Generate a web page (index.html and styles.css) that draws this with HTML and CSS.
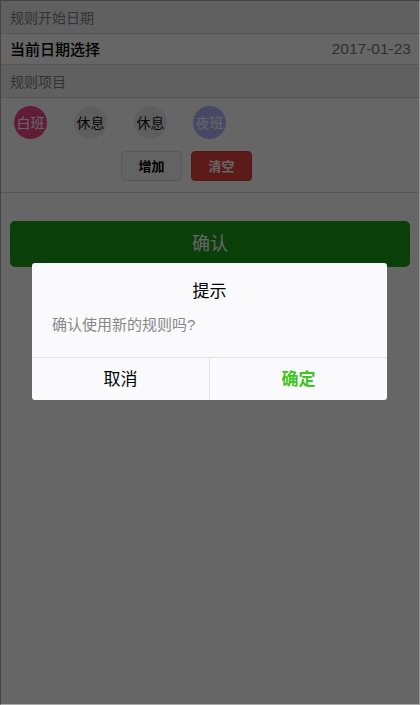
FILE: index.html
```html
<!DOCTYPE html>
<html lang="zh-CN">
<head>
<meta charset="utf-8">
<title>规则设置</title>
<link rel="stylesheet" href="styles.css">
</head>
<body>
<div class="frame">
  <div class="page">
    <div class="section-title">规则开始日期</div>
    <div class="cell">
      <span class="cell-label">当前日期选择</span>
      <span class="cell-value">2017-01-23</span>
    </div>
    <div class="section-title">规则项目</div>
    <div class="rules">
      <div class="chips">
        <span class="chip chip-day">白班</span>
        <span class="chip chip-rest">休息</span>
        <span class="chip chip-rest">休息</span>
        <span class="chip chip-night">夜班</span>
      </div>
      <div class="actions">
        <button class="btn btn-add">增加</button>
        <button class="btn btn-clear">清空</button>
      </div>
    </div>
    <div class="confirm-area">
      <button class="btn-primary">确认</button>
    </div>
  </div>
  <div class="mask"></div>
  <div class="dialog">
    <div class="dialog-title">提示</div>
    <div class="dialog-body">确认使用新的规则吗?</div>
    <div class="dialog-ft">
      <span class="dialog-btn dialog-cancel">取消</span>
      <span class="dialog-btn dialog-ok">确定</span>
    </div>
  </div>
</div>
</body>
</html>
```

FILE: styles.css
```css
* { box-sizing: border-box; }
html, body { margin: 0; padding: 0; }
body {
  font-family: "Liberation Sans", "Noto Sans CJK SC", sans-serif;
  background: #fff;
}
.frame {
  position: relative;
  width: 420px;
  height: 705px;
  border-style: solid;
  border-width: 1px;
  border-color: #444 #999 #aaa #444;
  overflow: hidden;
  background: #fff;
}
.page {
  display: flex;
  flex-direction: column;
  height: 100%;
}
.section-title {
  height: 33px;
  padding: 0 9px;
  display: flex;
  align-items: center;
  font-size: 14px;
  line-height: 1;
  color: #808080;
  background: #efeff1;
  border-bottom: 1px solid #d6d6d6;
  padding-top: 2px;
}
.cell {
  height: 31px;
  display: flex;
  align-items: center;
  justify-content: space-between;
  padding: 0 8px 0 9px;
  border-bottom: 1px solid #d6d6d6;
  font-size: 15px;
  line-height: 1;
}
.cell-label { color: #000; font-weight: 500; }
.cell-value { color: #7a7a7a; font-size: 15.5px; }
.rules {
  padding: 8px 0 11px 13px;
  border-bottom: 1px solid #d6d6d6;
}
.chips {
  display: flex;
  gap: 27px;
}
.chip {
  width: 33px;
  height: 33px;
  border-radius: 50%;
  display: flex;
  align-items: center;
  justify-content: center;
  font-size: 14px;
  line-height: 1;
}
.chip:nth-child(4) { margin-left: -1px; }
.chip-day { background: #f24a8c; color: #fff; }
.chip-rest { background: #ececec; color: #111; }
.chip-night { background: #b2b2ff; color: #fff; }
.actions {
  display: flex;
  gap: 9px;
  margin-top: 12px;
  padding-left: 107px;
}
.btn {
  width: 61px;
  height: 30px;
  border-radius: 4px;
  font-family: inherit;
  font-size: 13px;
  font-weight: bold;
  padding: 0;
  line-height: 1;
}
.btn-add { background: #f8f8f8; border: 1px solid #ddd; color: #000; }
.btn-clear { background: #e64340; border: 1px solid #ce3c39; color: #fff; }
.confirm-area {
  padding: 28px 9px 0;
}
.btn-primary {
  display: block;
  width: 100%;
  height: 46px;
  border: none;
  border-radius: 5px;
  background: #1b9e1a;
  color: #fff;
  font-family: inherit;
  font-size: 18px;
  line-height: 1;
  padding: 0;
}
.mask {
  position: absolute;
  inset: 0;
  background: rgba(0, 0, 0, 0.6);
}
.dialog {
  position: absolute;
  left: 31px;
  top: 262px;
  width: 355px;
  background: #fafafc;
  border-radius: 3px;
  overflow: hidden;
}
.dialog-title {
  padding-top: 19px;
  height: 46px;
  text-align: center;
  font-size: 17px;
  line-height: 20px;
  color: #000;
}
.dialog-body {
  padding: 6px 20px 0;
  height: 48px;
  font-size: 15px;
  line-height: 20px;
  color: #888;
}
.dialog-ft {
  display: flex;
  height: 43px;
  border-top: 1px solid #e2e2e4;
}
.dialog-btn {
  flex: 1;
  display: flex;
  align-items: center;
  justify-content: center;
  font-size: 17px;
  line-height: 1;
}
.dialog-cancel { color: #000; border-right: 1px solid #e2e2e4; }
.dialog-ok { color: #3cc51f; font-weight: bold; }
```
